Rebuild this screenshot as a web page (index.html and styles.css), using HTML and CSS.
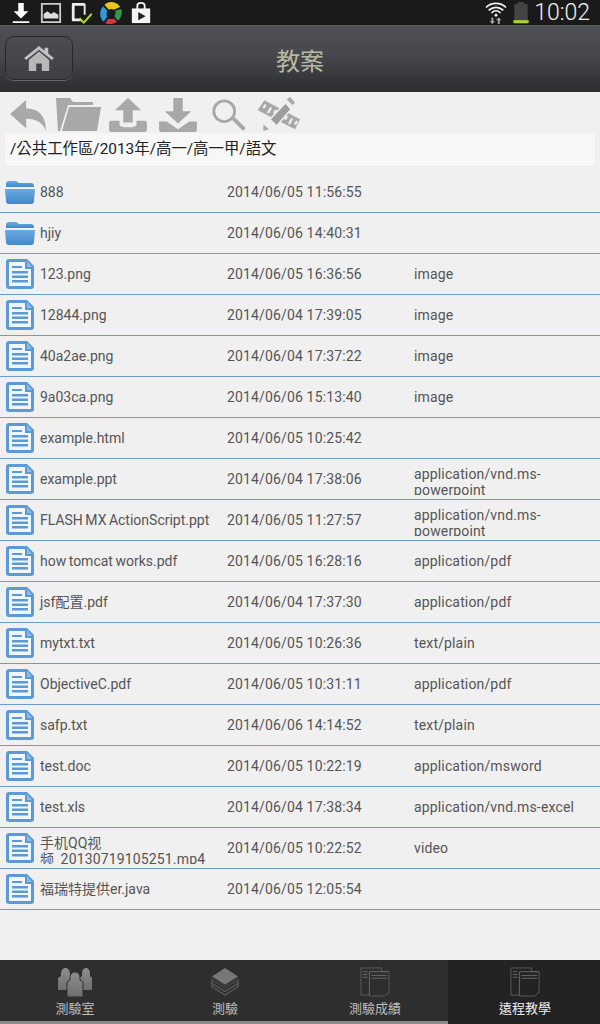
FILE: index.html
```html
<!DOCTYPE html>
<html lang="zh-Hant">
<head>
<meta charset="utf-8">
<title>教案</title>
<link rel="stylesheet" href="styles.css">
</head>
<body>
<svg class="defs" width="0" height="0" aria-hidden="true">
  <defs>
    <linearGradient id="blueg" x1="0" y1="0" x2="0" y2="1"><stop offset="0" stop-color="#6aa9e0"/><stop offset="1" stop-color="#4288cb"/></linearGradient>
    <linearGradient id="persong" x1="0" y1="0" x2="0" y2="1"><stop offset="0" stop-color="#8e8e8e"/><stop offset="1" stop-color="#6e6e6e"/></linearGradient>
    <symbol id="folder" viewBox="0 0 30 24">
      <path d="M1 4c0-2 1-3 3-3h6c2 0 3 2 5 2h11c2 0 3 1 3 3v1H1z" fill="url(#blueg)"/>
      <path d="M0 9h30l-1 12c0 2-1 3-3 3H4c-2 0-3-1-3-3z" fill="url(#blueg)"/>
    </symbol>
    <symbol id="file" viewBox="0 0 28 30">
      <path d="M3 0h18l7 7v20c0 2-1 3-3 3H3c-2 0-3-1-3-3V3c0-2 1-3 3-3z" fill="#5b9ad6"/>
      <path d="M4 3h15v7h6v16c0 1 0 1-1 1H4c-1 0-1 0-1-1V4c0-1 0-1 1-1z" fill="#f1f6fb"/>
      <path d="M21 2l5 6h-5z" fill="#8dbce6"/>
      <path d="M6 7h10v2H6zM6 12h16v2.400H6zM6 16.500h16v2.400H6zM6 21h16v2.400H6z" fill="#5b9ad6"/>
    </symbol>
    <symbol id="sheets" viewBox="0 0 32 32">
      <path d="M1 1h22v4h8v22l-5 4H10v-1H1z" fill="none" stroke="#5c5c5c" stroke-width="1"/>
      <path d="M10 5h21M10 5v25M3 5h5M3 8h5M3 11h5M12 9h17M12 12h17" fill="none" stroke="#6a6a6a" stroke-width="1"/>
    </symbol>
  </defs>
</svg>

<div class="status">
  <div class="status-left">
    <svg class="st" viewBox="0 0 24 24"><path d="M9 1h6v9h5l-8 8-8-8h5zM3 21h18v2H3z" fill="#fff"/></svg>
    <svg class="st" viewBox="0 0 24 24"><path d="M2 2h20v20H2z" fill="none" stroke="#ccc" stroke-width="2"/><path d="M4 18v-5l4-3 4 3 3-2 5 3v4z" fill="#ddd"/></svg>
    <svg class="st" viewBox="0 0 24 24"><path d="M3 1h12c1 0 2 1 2 2v11h-2V4H5v14h7v3H3c-1 0-1-1-1-2V3c0-1 0-2 1-2z" fill="#eee"/><path d="M11 17l4 4 8-9 1.500 1.500-9.500 10.500-5.500-5.500z" fill="#b5dc2a"/></svg>
    <svg class="st" viewBox="0 0 24 24"><path d="M12 0a12 12 0 0 1 10 5.500l-7 3c-2-1.500-4-1-5.500 0L5 3c2-2 4.500-3 7-3z" fill="#e8c51a"/><path d="M23 7.500c2 5 0 10-3.500 13l-4-5.500c1.500-1.500 2-3.500 1-5.500z" fill="#2e9c4a"/><path d="M18.500 21.500c-4 3-9 3.500-13 1.500l4-5c2 1 4 .8 5.500 0z" fill="#d8343f"/><path d="M4 21.500C-1 17-1 9 3.500 4.500l4.500 5c-1 2-1.200 4-.2 6.500z" fill="#2f9bd6"/></svg>
    <svg class="st" viewBox="0 0 24 24"><path d="M2 7h20v16H2z" fill="#f4f4f4"/><path d="M8 8V4c0-4 8-4 8 0v4" fill="none" stroke="#f4f4f4" stroke-width="2"/><path d="M9 11l8 4.500-8 4.500z" fill="#222"/></svg>
  </div>
  <div class="status-right">
    <svg class="wifi" viewBox="0 0 24 24"><path d="M1 6c6-6 16-6 22 0M4 9c5-4 11-4 16 0M7 12c3-3 7-3 10 0" fill="none" stroke="#eee" stroke-width="1.800"/><circle cx="12" cy="14.500" r="1.600" fill="#eee"/><path d="M7 17h2v4h2l-3 3-3-3h2zM15 17l3 3h-2v4h-2v-4h-2z" fill="#aaa"/></svg>
    <svg class="batt" viewBox="0 0 16 24"><path d="M5 1h6v2h4v21H1V3h4z" fill="#444"/><path d="M0 20h16v3H0z" fill="#a6d52e"/></svg>
    <span class="time">10:02</span>
  </div>
</div>

<header class="appbar">
  <button class="home" type="button" aria-label="首頁">
    <svg viewBox="0 0 32 27" width="30" height="25"><path d="M16 0L0 13l2 2L16 4l14 11 2-2-6-5V2h-4v3z" fill="#c2c2c2"/><path d="M5 15L16 6l11 9v12h-8v-8h-6v8H5z" fill="#b8b8b8"/></svg>
  </button>
  <h1 class="title">教案</h1>
</header>

<main class="content">
  <div class="tools">
    <div class="tool"><svg class="tool-ic" width="38" height="34" viewBox="0 0 40 36"><path d="M18 2v9c12 0 21 6 21 24-3-9-10-13-21-13v10L1 17z" fill="#a8a8a8"/></svg></div>
    <div class="tool"><svg class="tool-ic" width="46" height="36" viewBox="0 0 46 36"><path d="M1 2h14l3 4h20v3H13l-8 26H3z" fill="#a8a8a8"/><path d="M14 11h32l-4 24H7z" fill="#a8a8a8"/></svg></div>
    <div class="tool"><svg class="tool-ic" width="38" height="34" viewBox="0 0 40 36"><path d="M20 0l14 13h-9v13H15V13H6zM2 24h9v4c0 2 4 3 9 3s9-1 9-3v-4h9c1 0 2 1 2 3v6c0 2-1 3-3 3H3c-2 0-3-1-3-3v-6c0-2 1-3 2-3z" fill="#a8a8a8"/></svg></div>
    <div class="tool"><svg class="tool-ic" width="38" height="34" viewBox="0 0 40 36"><path d="M15 0h10v14h9L20 27 6 14h9zM0 25h8l12 8 12-8h8v8c0 2-1 3-3 3H3c-2 0-3-1-3-3z" fill="#a8a8a8"/></svg></div>
    <div class="tool"><svg class="tool-ic" width="34" height="34" viewBox="0 0 36 36"><circle cx="14" cy="14" r="11" fill="none" stroke="#a8a8a8" stroke-width="3"/><path d="M22 23l3-3 11 11c1 2-1 4-3 3z" fill="#a8a8a8"/></svg></div>
    <div class="tool"><svg class="tool-ic" width="46" height="36" viewBox="0 0 46 36"><path d="M9.300 4.300L45 23.300 40 33.300 2.700 14.300z" fill="#a8a8a8"/><path d="M9.500 8l-2 3.500 2 1 2-3.500zM15 11l-3 5.500 2 1 3-5.500zM20 13.500l-2 3.500 2 1 2-3.500zM31 19.500l-2 3.500 2 1 2-3.500zM36 22l-3 5.500 2 1 3-5.500zM41 24.500l-2 3.500 2 1 2-3.500z" fill="#f0f0f0"/><path d="M15 23.300L30.700 6.700 36 13.300 21.700 30z" fill="#9c9c9c" stroke="#f0f0f0" stroke-width="1.500"/><path d="M31.700 3.300L35 1 40 6.700 37.300 9z" fill="#a8a8a8"/><path d="M8.300 28.300L14 33.300 8.300 35z" fill="#a8a8a8"/></svg></div>
  </div>
  <div class="path">/公共工作區/2013年/高一/高一甲/語文</div>

  <ul class="list">
    <li class="row"><svg class="ic ic-folder"><use href="#folder"/></svg><span class="name">888</span><span class="date">2014/06/05 11:56:55</span><span class="type"></span></li>
    <li class="row"><svg class="ic ic-folder"><use href="#folder"/></svg><span class="name">hjiy</span><span class="date">2014/06/06 14:40:31</span><span class="type"></span></li>
    <li class="row"><svg class="ic"><use href="#file"/></svg><span class="name">123.png</span><span class="date">2014/06/05 16:36:56</span><span class="type">image</span></li>
    <li class="row"><svg class="ic"><use href="#file"/></svg><span class="name">12844.png</span><span class="date">2014/06/04 17:39:05</span><span class="type">image</span></li>
    <li class="row"><svg class="ic"><use href="#file"/></svg><span class="name">40a2ae.png</span><span class="date">2014/06/04 17:37:22</span><span class="type">image</span></li>
    <li class="row"><svg class="ic"><use href="#file"/></svg><span class="name">9a03ca.png</span><span class="date">2014/06/06 15:13:40</span><span class="type">image</span></li>
    <li class="row"><svg class="ic"><use href="#file"/></svg><span class="name">example.html</span><span class="date">2014/06/05 10:25:42</span><span class="type"></span></li>
    <li class="row"><svg class="ic"><use href="#file"/></svg><span class="name">example.ppt</span><span class="date">2014/06/04 17:38:06</span><span class="type wrap">application/vnd.ms-powerpoint</span></li>
    <li class="row"><svg class="ic"><use href="#file"/></svg><span class="name">FLASH MX ActionScript.ppt</span><span class="date">2014/06/05 11:27:57</span><span class="type wrap">application/vnd.ms-powerpoint</span></li>
    <li class="row"><svg class="ic"><use href="#file"/></svg><span class="name">how tomcat works.pdf</span><span class="date">2014/06/05 16:28:16</span><span class="type">application/pdf</span></li>
    <li class="row"><svg class="ic"><use href="#file"/></svg><span class="name">jsf配置.pdf</span><span class="date">2014/06/04 17:37:30</span><span class="type">application/pdf</span></li>
    <li class="row"><svg class="ic"><use href="#file"/></svg><span class="name">mytxt.txt</span><span class="date">2014/06/05 10:26:36</span><span class="type">text/plain</span></li>
    <li class="row"><svg class="ic"><use href="#file"/></svg><span class="name">ObjectiveC.pdf</span><span class="date">2014/06/05 10:31:11</span><span class="type">application/pdf</span></li>
    <li class="row"><svg class="ic"><use href="#file"/></svg><span class="name">safp.txt</span><span class="date">2014/06/06 14:14:52</span><span class="type">text/plain</span></li>
    <li class="row"><svg class="ic"><use href="#file"/></svg><span class="name">test.doc</span><span class="date">2014/06/05 10:22:19</span><span class="type">application/msword</span></li>
    <li class="row"><svg class="ic"><use href="#file"/></svg><span class="name">test.xls</span><span class="date">2014/06/04 17:38:34</span><span class="type">application/vnd.ms-excel</span></li>
    <li class="row"><svg class="ic"><use href="#file"/></svg><span class="name wrap">手机QQ视<span class="nobr">频_20130719105251.mp4</span></span><span class="date">2014/06/05 10:22:52</span><span class="type">video</span></li>
    <li class="row"><svg class="ic"><use href="#file"/></svg><span class="name">福瑞特提供er.java</span><span class="date">2014/06/05 12:05:54</span><span class="type"></span></li>
  </ul>
</main>

<nav class="tabs">
  <div class="tab">
    <svg class="tab-ic" viewBox="0 0 34 30"><path d="M3 7c0-8 9-8 9 0v2l1 2v12H0V11l3-2z" fill="url(#persong)"/><path d="M24 7c0-8 8-8 8 0v2l2 2v12H21V11l3-2z" fill="url(#persong)"/><path d="M12 11c0-8 10-8 10 0v2l3 2v15H9V15l3-2z" fill="url(#persong)" stroke="#2e2e2e"/></svg>
    <span class="tab-label">測驗室</span>
  </div>
  <div class="tab">
    <svg class="tab-ic" viewBox="0 0 36 32"><path d="M18 22L4 14v7l14 9 14-9v-7z" fill="none" stroke="#555" stroke-width="1.500"/><path d="M3 17l15 9 15-9" fill="none" stroke="#555" stroke-width="1.500"/><path d="M18 1L4 10l14 9 14-9z" fill="#777"/><path d="M4 10v4l14 9 14-9v-4l-14 9z" fill="#3b3b3b"/></svg>
    <span class="tab-label">測驗</span>
  </div>
  <div class="tab">
    <svg class="tab-ic"><use href="#sheets"/></svg>
    <span class="tab-label">測驗成績</span>
  </div>
  <div class="tab tab-active">
    <svg class="tab-ic"><use href="#sheets"/></svg>
    <span class="tab-label">遠程教學</span>
  </div>
</nav>
</body>
</html>
```

FILE: styles.css
```css
* { box-sizing: border-box; }
html, body { margin: 0; padding: 0; }
body {
  width: 600px;
  height: 1024px;
  overflow: hidden;
  display: flex;
  flex-direction: column;
  background: #f0f0f0;
  font-family: Roboto, "Noto Sans CJK TC", sans-serif;
  color: #555;
}
.defs { position: absolute; }

.status {
  height: 25px;
  flex: none;
  background: #1a1a1a;
  display: flex;
  justify-content: space-between;
  align-items: center;
  padding: 0 10px 0 10px;
}
.status-left { display: flex; gap: 8px; align-items: center; }
.st { width: 22px; height: 22px; display: block; }
.status-right { display: flex; align-items: center; }
.wifi { width: 22px; height: 24px; margin-right: 6px; }
.batt { width: 16px; height: 23px; margin-right: 5px; }
.time { font-size: 23px; font-weight: 300; color: #f2f2f2; line-height: 25px; }

.appbar {
  height: 67px;
  flex: none;
  display: flex;
  align-items: center;
  position: relative;
  padding: 0 5px;
  background: linear-gradient(#4d5055, #46484d 45%, #2c2d30);
  border-top: 1px solid #5a5c60;
}
.home {
  width: 68px;
  height: 44px;
  margin-bottom: 2px;
  padding: 0;
  display: flex;
  align-items: center;
  justify-content: center;
  background: linear-gradient(#4a4d52, #3d3f44);
  border: 1px solid #26272a;
  border-radius: 9px;
  box-shadow: 0 1px 0 #64666a;
}
.title {
  position: absolute;
  left: 0;
  right: 0;
  top: 0;
  bottom: 0;
  margin: 0;
  display: flex;
  align-items: center;
  justify-content: center;
  font-size: 24px;
  font-weight: 400;
  color: #b9b9a2;
  pointer-events: none;
}

.content { flex: 1; min-height: 0; }
.tools {
  height: 41px;
  display: grid;
  grid-template-columns: repeat(6, 50px);
  padding-left: 3px;
}
.tool { display: flex; justify-content: center; align-items: flex-end; padding-bottom: 1px; }
.tool-ic { display: block; }
.path {
  height: 33px;
  margin: 0 5px;
  padding: 0 5px;
  background: #f7f7f7;
  font-size: 15.400px;
  line-height: 33px;
  color: #222;
}
.list { list-style: none; margin: 6px 0 0; padding: 0; }
.row {
  height: 41px;
  display: grid;
  grid-template-columns: 40px 187px 187px 1fr;
  align-items: center;
  border-bottom: 1px solid #6d9bcb;
  font-size: 14px;
  line-height: 16px;
}
.ic { width: 28px; height: 30px; margin-left: 6px; display: block; }
.ic-folder { width: 30px; height: 24px; margin-left: 5px; }
.name, .date, .type { display: block; padding-right: 4px; }
.name { word-spacing: -1px; }
.date, .type { letter-spacing: .15px; }
.wrap {
  height: 29px;
  margin-top: 3px;
  overflow: hidden;
}
.nobr { white-space: nowrap; letter-spacing: .15px; }

.tabs {
  height: 64px;
  flex: none;
  display: grid;
  grid-template-columns: repeat(4, 1fr);
  background: #2e2e2e;
}
.tab {
  display: flex;
  flex-direction: column;
  align-items: center;
  padding-top: 7px;
  border-bottom: 3px solid #8a8a8a;
}
.tab-active { background: #232323; border-bottom-color: #232323; box-shadow: -2px 0 0 #232323; }
.tab-ic { width: 34px; height: 30px; display: block; }
.tab-label {
  margin-top: 4px;
  font-size: 13px;
  line-height: 16px;
  color: #bdbdbd;
}
.tab-active .tab-label { color: #f0f0f0; }
```
